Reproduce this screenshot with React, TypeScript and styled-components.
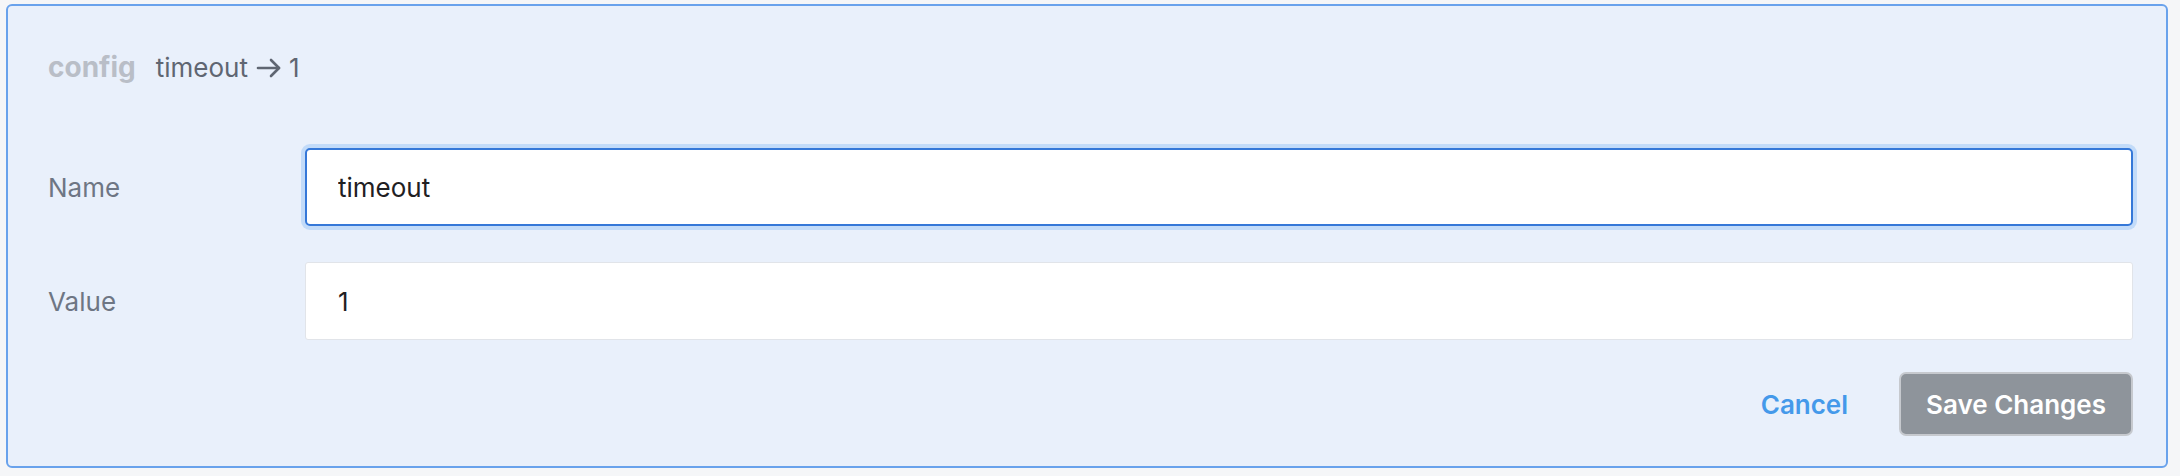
import React from 'react'
import styled, { createGlobalStyle } from 'styled-components'

const GlobalStyle = createGlobalStyle`
  html, body {
    margin: 0;
    background: #f5f6f8;
  }
  body {
    font-family: Inter, 'Noto Sans', sans-serif;
    -webkit-font-smoothing: antialiased;
  }
`

const Page = styled.div`
  padding: 4px 12px 8px 6px;
`

const Panel = styled.form`
  background: #e9f0fb;
  border: 2px solid #69a2ec;
  border-radius: 6px;
  padding: 41px 33px 30px 40px;
`

const Header = styled.div`
  display: flex;
  align-items: center;
  height: 40px;
  margin-bottom: 61px;
`

const Kind = styled.span`
  font-size: 28px;
  font-weight: 700;
  color: #b9bec7;
  margin-right: 20px;
`

const Change = styled.span`
  display: flex;
  align-items: center;
  font-size: 26px;
  color: #5f6672;
`

const Arrow = styled.svg`
  margin: 2px 7px 0 8px;
`

const Fields = styled.div`
  display: flex;
  flex-direction: column;
  gap: 36px;
`

const Row = styled.label`
  display: grid;
  grid-template-columns: 257px 1fr;
  align-items: center;
`

const Label = styled.span`
  font-size: 26px;
  color: #6e7684;
`

const Input = styled.input<{ $focused?: boolean }>`
  box-sizing: border-box;
  width: 100%;
  height: 78px;
  font: inherit;
  font-size: 26px;
  color: #1f2023;
  background: #fff;
  outline: none;
  border: ${p => (p.$focused ? '2px solid #3578d8' : '1px solid #e1e4e9')};
  border-radius: ${p => (p.$focused ? '5px' : '3px')};
  padding: 0 0 0 ${p => (p.$focused ? '31px' : '32px')};
  box-shadow: ${p => (p.$focused ? '0 0 0 4px #c2dbf9' : 'none')};
`

const Actions = styled.div`
  display: flex;
  justify-content: flex-end;
  align-items: center;
  margin-top: 32px;
`

const LinkButton = styled.button`
  background: none;
  border: none;
  padding: 0;
  margin-right: 51px;
  font: inherit;
  font-size: 26px;
  font-weight: 600;
  color: #4499ea;
  cursor: pointer;
`

const SaveButton = styled.button`
  height: 64px;
  padding: 0 25px;
  background: #8e949b;
  border: 2px solid #c6c9ce;
  border-radius: 7px;
  font: inherit;
  font-size: 26px;
  font-weight: 600;
  color: #fff;
  cursor: pointer;
`

const App = () => {
  return (
    <Page>
      <GlobalStyle />
      <Panel onSubmit={e => e.preventDefault()}>
        <Header>
          <Kind>config</Kind>
          <Change>
            timeout
            <Arrow width="26" height="20" viewBox="0 0 26 20" fill="none" stroke="#5f6672" strokeWidth="2.6" strokeLinecap="round" strokeLinejoin="round">
              <path d="M2 10h21" />
              <path d="M15 2l8 8-8 8" />
            </Arrow>
            1
          </Change>
        </Header>
        <Fields>
          <Row>
            <Label>Name</Label>
            <Input $focused defaultValue="timeout" />
          </Row>
          <Row>
            <Label>Value</Label>
            <Input defaultValue="1" />
          </Row>
        </Fields>
        <Actions>
          <LinkButton type="button">Cancel</LinkButton>
          <SaveButton type="submit">Save Changes</SaveButton>
        </Actions>
      </Panel>
    </Page>
  )
}

export default App
